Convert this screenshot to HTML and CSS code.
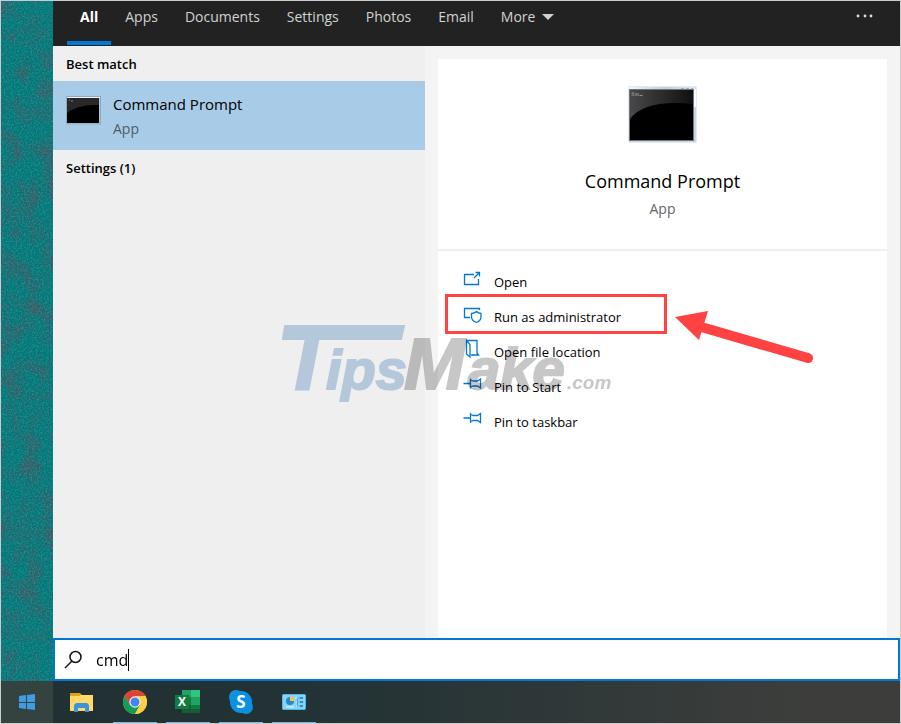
FILE: index.html
```html
<!DOCTYPE html>
<html lang="en">
<head>
<meta charset="utf-8">
<title>Search</title>
<link rel="stylesheet" href="styles.css">
</head>
<body>
<div class="screen">
  <div class="workspace">
    <div class="wallpaper">
      <svg width="100%" height="100%" aria-hidden="true">
        <filter id="blotch" x="0" y="0" width="100%" height="100%" color-interpolation-filters="sRGB">
          <feTurbulence type="fractalNoise" baseFrequency="0.05" numOctaves="3" seed="4"/>
          <feColorMatrix values="0 0 0 0 0.22  0 0 0 0 0.36  0 0 0 0 0.40  2.4 0 0 0 -1"/>
        </filter>
        <filter id="grain" x="0" y="0" width="100%" height="100%" color-interpolation-filters="sRGB">
          <feTurbulence type="fractalNoise" baseFrequency="0.6" numOctaves="2" seed="9"/>
          <feColorMatrix values="0 0 0 0 0.22  0 0 0 0 0.62  0 0 0 0 0.61  1.5 0 0 0 -0.6"/>
        </filter>
        <rect width="100%" height="100%" filter="url(#blotch)"/>
        <rect width="100%" height="100%" filter="url(#grain)"/>
      </svg>
    </div>
    <main class="search">
      <header class="tabs">
        <nav class="tab-list">
          <button class="tab active">All</button>
          <button class="tab">Apps</button>
          <button class="tab">Documents</button>
          <button class="tab">Settings</button>
          <button class="tab">Photos</button>
          <button class="tab">Email</button>
          <button class="tab more">More <svg width="12" height="6" viewBox="0 0 12 6" aria-hidden="true"><path d="M0 0h12L6 6z" fill="#d2d2d2"/></svg></button>
        </nav>
        <button class="options" aria-label="Options"><svg width="18" height="4" viewBox="0 0 18 4" fill="#ddd"><circle cx="2" cy="2" r="1.4"/><circle cx="9" cy="2" r="1.4"/><circle cx="15" cy="2" r="1.4"/></svg></button>
      </header>
      <div class="columns">
        <section class="results">
          <h2 class="group">Best match</h2>
          <button class="result">
            <svg class="result-icon" width="36" height="29" viewBox="0 0 36 29" aria-hidden="true">
              <rect x="0.5" y="0.5" width="34" height="27.5" fill="#b6c3cf" stroke="#91a9be"/>
              <path d="M1 1h33v1H1z" fill="#edf3f8"/>
              <rect x="1" y="2" width="32" height="25" fill="#000"/>
              <path d="M1 2h32v7Q12 8 1 17z" fill="#282828"/>
              <path d="M3 4h1M5 5h2" stroke="#888"/>
            </svg>
            <span class="result-text"><span class="result-name">Command Prompt</span><span class="kind">App</span></span>
          </button>
          <h2 class="group">Settings (1)</h2>
        </section>
        <section class="preview">
          <div class="card">
            <div class="hero">
              <svg width="70" height="58" viewBox="0 0 70 58" aria-hidden="true">
                <defs>
                  <linearGradient id="frame" x2="1"><stop stop-color="#f3f7fa"/><stop offset=".55" stop-color="#bdd0d7"/><stop offset="1" stop-color="#e6e8ee"/></linearGradient>
                  <linearGradient id="gloss" x2="1"><stop stop-color="#484848"/><stop offset="1" stop-color="#101010"/></linearGradient>
                </defs>
                <rect x="0.5" y="0.5" width="68" height="56" rx="1" fill="#cdd3df" stroke="#e7e9ee"/>
                <path d="M1 1h66v3H1z" fill="url(#frame)"/>
                <path d="M66 3h2v18h-2z" fill="#fafbfc"/>
                <path d="M53 2.500h3M58 2.500h3M63 2.500h2" stroke="#a4aebb"/>
                <rect x="1.500" y="3.500" width="64" height="51" fill="#000" stroke="#6b7788"/>
                <path d="M2 4h63v14Q17 13 2 33z" fill="url(#gloss)"/>
                <path d="M3.500 7h3M3.500 9h3M8 7v3M10 7v3M11.500 9.500h3" stroke="#aaa" stroke-width=".8"/>
              </svg>
              <h1>Command Prompt</h1>
              <p class="kind">App</p>
            </div>
            <ul class="actions">
              <li><button class="action"><svg class="glyph" viewBox="0 0 20 20"><path d="M12 5.500H2.500v10h14V10M12 9l5-5M13.500 3.500h4v4"/></svg>Open</button></li>
              <li class="marked"><button class="action"><svg class="glyph" viewBox="0 0 20 20"><path d="M17.500 6V4.500h-15v9H8M9.500 9.500q3-.2 5-2 2 1.800 4.500 2V13q0 3.500-4.500 5.500Q9.500 16.500 9.500 13zM3 13.500h2"/></svg>Run as administrator</button>
                <span class="outline"></span>
                <svg class="arrow" width="140" height="54" viewBox="0 0 140 54" aria-hidden="true"><path d="M24 17L134 49" stroke="#ff4242" stroke-width="10" stroke-linecap="round"/><path d="M1 8L34 2L25 31z" fill="#ff4242"/></svg>
              </li>
              <li><button class="action"><svg class="glyph" viewBox="0 0 20 20"><path d="M4.500 1.500h10.500v12.500l1.500 2H9M4.500 1.500v13.500l3.500 3V5.500z"/></svg>Open file location</button></li>
              <li><button class="action"><svg class="glyph" viewBox="0 0 20 20"><path d="M1.500 9.500H8M8.500 4.500v10M8.500 6l3 1h4l3-2v9l-3-2h-4l-3 1"/></svg>Pin to Start</button></li>
              <li><button class="action"><svg class="glyph" viewBox="0 0 20 20"><path d="M1.500 9H8M8.500 4v10M8.500 5.500l3 1h4l3-2v9l-3-2h-4l-3 1"/></svg>Pin to taskbar</button></li>
            </ul>
          </div>
        </section>
        <svg class="watermark" width="350" height="96" viewBox="0 0 350 96" aria-hidden="true">
          <g class="mark-blue"><text x="9" y="69" font-size="88">T</text><path d="M14 6H133L130 19H12z"/><text x="55" y="69" font-size="56">ips</text></g>
          <g class="mark-grey"><text x="133" y="69" font-size="73">M</text><text x="197" y="69" font-size="58">ake</text><text class="domain" x="296" y="69" font-size="19">.com</text></g>
        </svg>
      </div>
      <form class="query">
        <label for="q" aria-label="Search"><svg width="20" height="20" viewBox="0 0 20 20" fill="none" stroke="#111" stroke-width="1.500"><circle cx="11.500" cy="7" r="5.500"/><path d="M8 11L1 18"/></svg></label>
        <input id="q" type="text" value="cmd"><span class="caret"></span>
      </form>
    </main>
  </div>
  <footer class="taskbar">
    <button class="task start" aria-label="Start"><svg width="18" height="18" viewBox="0 0 18 18" fill="#429ce3"><path d="M1 3l7-1v7H1zM9 2l8-1v8H9zM1 10h7v6l-7-1zM9 10h8v7l-8-1z"/></svg></button>
    <button class="task" aria-label="File Explorer"><svg width="26" height="24" viewBox="0 0 26 24"><path d="M1 3h10l2 2h11v5H1z" fill="#dfa310"/><path d="M1 6h9l2-1h12v16H1z" fill="#ffda68"/><path d="M5 22v-7l2-2h11l2 2v7h-4v-4H9v4z" fill="#3c94da"/></svg></button>
    <button class="task open" aria-label="Chrome"><svg width="26" height="26" viewBox="0 0 26 26"><circle cx="13" cy="13" r="12" fill="#ffcd40"/><path d="M2.600 7A12 12 0 0 1 23.400 7H13L7.800 16z" fill="#db4437"/><path d="M2.600 7A12 12 0 0 0 13 25L18 16 8 16z" fill="#0f9d58"/><path d="M13 7h10.400A12 12 0 0 1 13 25l5.200-9z" fill="#ffcd40"/><circle cx="13" cy="13" r="5.700" fill="#f1f1f1"/><circle cx="13" cy="13" r="4.500" fill="#4285f4"/></svg></button>
    <button class="task open" aria-label="Excel"><svg width="26" height="26" viewBox="0 0 26 26"><path d="M7 1h18v23H7z" fill="#21a366"/><path d="M16 1h9v7h-9z" fill="#33c481"/><path d="M7 8h9v8H7z" fill="#107c41"/><path d="M7 16h18v8H7z" fill="#185c37"/><path d="M16 16h9v4h-9z" fill="#107c41"/><rect y="6" width="14" height="14" fill="#107c41"/><text class="logo-letter" x="7" y="17" font-size="12">X</text></svg></button>
    <button class="task open" aria-label="Skype"><svg width="26" height="26" viewBox="0 0 26 26"><circle cx="8" cy="8" r="7" fill="#1691dc"/><circle cx="18" cy="18" r="7" fill="#168bd7"/><circle cx="13" cy="13" r="11" fill="#0792e3"/><text class="logo-letter" x="13" y="19" font-size="17">S</text></svg></button>
    <button class="task open" aria-label="Control Panel"><svg width="24" height="18" viewBox="0 0 24 18"><rect x=".5" y="1.500" width="23" height="15" rx="1" fill="#87d2f6" stroke="#4eb8ed"/><circle cx="8" cy="8" r="4" fill="#2588c8"/><path d="M8 8V3.500A4.500 4.500 0 0 1 12.500 8z" fill="#ffc146"/><path d="M4 14h8M13 5h3M14 9h3M14 13h3" stroke="#e6f8ff"/><path d="M15 5h3M15 9h3M15 13h3M15.500 5v8" stroke="#4ba6da"/><path d="M18 4h3v2h-3zM18 8h3v2h-3zM18 12h3v2h-3z" fill="#2b94d0"/></svg></button>
  </footer>
</div>
</body>
</html>
```
FILE: styles.css
```css
* { box-sizing: border-box; }
body, h1, h2, p, ul { margin: 0; padding: 0; }
body { font-family: "Open Sans", "Noto Sans", sans-serif; font-size: 14px; line-height: 20px; color: #000; }
button, input { font: inherit; color: inherit; border: 0; background: none; padding: 0; }
svg { display: block; flex: none; }

.screen { min-height: 100vh; display: flex; flex-direction: column; border: 1px solid #ccc; }
.workspace { flex: 1; display: flex; }
.wallpaper { width: 52px; background: #037678; position: relative; }
.wallpaper svg { position: absolute; inset: 0; }
.search { flex: 1; min-width: 0; display: flex; flex-direction: column; }

.tabs { height: 45px; background: #222; color: #d2d2d2; display: flex; justify-content: space-between; padding: 0 26px 0 14px; }
.tab-list { display: flex; gap: 1px; }
.tab { padding: 6px 13px 15px; border-bottom: 4px solid transparent; height: 44px; display: flex; align-items: flex-start; }
.tab.active { color: #fff; font-weight: 700; border-color: #0078d7; }
.more { gap: 7px; }
.more svg { margin-top: 7px; }
.options { height: 30px; }

.columns { flex: 1; display: flex; position: relative; }
.results { width: 372px; background: #efefef; }
.group { font-size: 13px; line-height: 20px; font-weight: 600; padding: 8px 13px 7px; }
.result { width: 100%; height: 69px; background: #a8cbe8; display: flex; gap: 11px; padding: 13px; text-align: left; }
.result-icon { margin-top: 2px; }
.result-text { display: flex; flex-direction: column; gap: 5px; }
.result-name { font-size: 15px; }
.kind { font-size: 14px; line-height: 20px; color: #666; }
.result .kind { color: #4d5d69; }

.preview { flex: 1; background: #f4f4f4; padding: 13px 13px 0; display: flex; }
.card { flex: 1; background: #fff; }
.hero { display: flex; flex-direction: column; align-items: center; padding: 27px 0 30px; border-bottom: 2px solid #f0f0f0; }
h1 { font-size: 18px; line-height: 28px; font-weight: 400; margin: 23px 0 4px; }
.actions { list-style: none; padding: 13px 0 0 24px; }
.actions li { position: relative; height: 35px; }
.action { display: flex; gap: 12px; align-items: center; height: 35px; font-size: 13px; }
.glyph { width: 20px; height: 20px; margin-bottom: 5px; fill: none; stroke: #0078d7; stroke-width: 1.3; }
.outline { position: absolute; left: -17px; top: -5px; width: 222px; height: 40px; border: 3px solid #ff4242; }
.arrow { position: absolute; left: 212px; top: 10px; }
.watermark { position: absolute; left: 218px; top: 274px; pointer-events: none; font-family: "Liberation Sans", sans-serif; font-weight: 700; font-style: italic; opacity: .6; mix-blend-mode: multiply; }
.mark-blue { fill: #98bbdc; stroke: #98bbdc; stroke-width: 2; }
.mark-grey { fill: #a1a1a1; stroke: #a1a1a1; stroke-width: 2; }
.domain { stroke: none; }

.query { height: 43px; background: #fff; border: 2px solid #0078d7; display: flex; align-items: center; padding: 0 9px; }
.query input { field-sizing: content; font-size: 16px; outline: 0; margin-left: 12px; }
.caret { width: 1px; height: 22px; background: #000; }

.taskbar { height: 42px; background: linear-gradient(90deg, #203033, #243335 40%, #3d3e3c 90%); display: flex; gap: 9px; }
.task { width: 44px; display: flex; align-items: center; justify-content: center; border-bottom: 1px solid transparent; }
.task.start { width: 52px; background: #344240; margin-right: -2px; }
.task.open { border-color: #76b9ed; }
.logo-letter { fill: #fff; font-weight: 700; text-anchor: middle; }
```
